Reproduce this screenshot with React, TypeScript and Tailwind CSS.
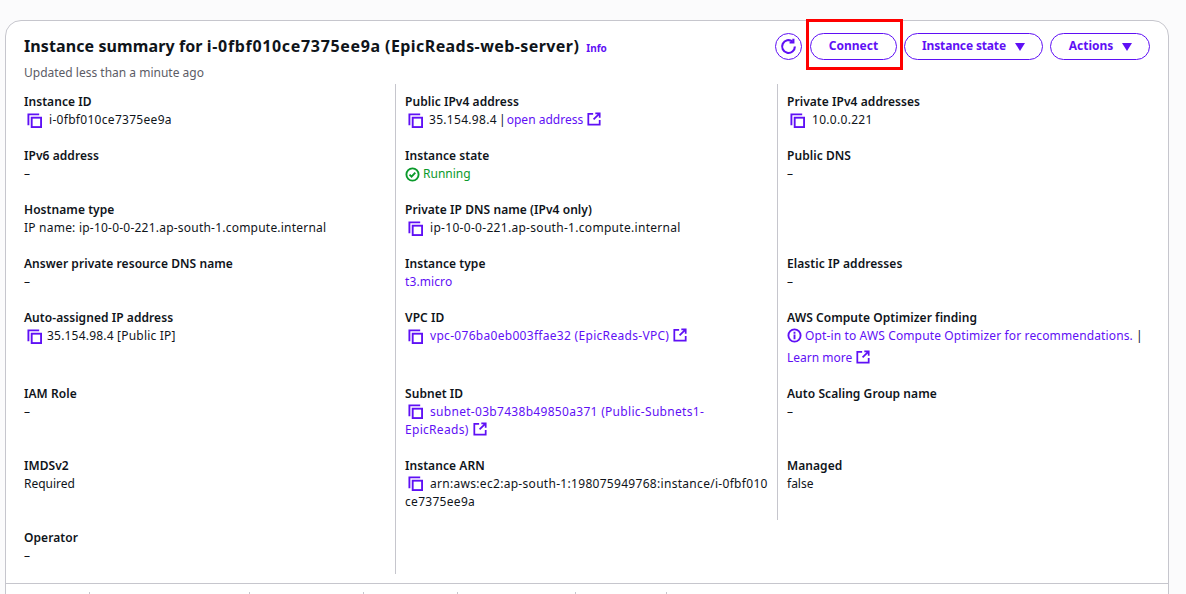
import React from 'react';

const LINK = 'text-[#5f10f5]';
const ID = 'tracking-[0.3px]';

const CopyIcon = () => (
  <svg viewBox="0 0 16 16" className={`w-[15px] h-[15px] shrink-0 ${LINK}`} fill="none" stroke="currentColor" strokeWidth="2">
    <path d="M1.5 13V1.5H13" />
    <rect x="5" y="5" width="10" height="10" />
  </svg>
);

const ExternalIcon = () => (
  <svg viewBox="0 0 16 16" className={`inline-block w-[14px] h-[14px] ml-[4px] align-[-2px] ${LINK}`} fill="none" stroke="currentColor" strokeWidth="2">
    <path d="M7 2H1.5v12.5h13V9" />
    <path d="M9.5 1.5h5v5M14.5 1.5 7.5 8.5" />
  </svg>
);

const Dash = () => <div>–</div>;

const Field = ({ label, children, border }: { label: string; children?: React.ReactNode; border?: boolean }) => (
  <div className={`pt-[9px] pb-[9px] pr-[8px] ${border ? 'border-l border-[#c6c6cd] pl-[9px]' : ''}`}>
    <div className="font-semibold leading-[18px] tracking-[0.06px]">{label}</div>
    <div className="leading-[18px]">{children}</div>
  </div>
);

const Tick = ({ w }: { w: string }) => <div className={`${w} border-r border-[#c6c6cd] h-[4px]`} />;

export default function App() {
  return (
    <div className="h-[594px] overflow-hidden bg-[#fbfbfc] pt-[20px] pl-[5px] pr-[17px] text-[12px] text-[#0f141a]" style={{ fontFamily: '"Noto Sans", sans-serif' }}>
      <div className="bg-white border border-[#c6c6cd] rounded-t-[16px] h-[600px]">
        {/* Header */}
        <div className="flex justify-between pl-[18px] pr-[18px] pt-[12px] h-[63px]">
          <div>
            <div className="flex items-baseline">
              <h1 className="text-[16px] font-bold leading-[26px] tracking-[0.1px]">
                Instance summary for <span className="tracking-[0.67px]">i-0fbf010ce7375ee9a</span>{' '}
                <span className="tracking-[0.42px]">(EpicReads-web-server)</span>
              </h1>
              <span className={`ml-[7px] text-[10px] font-bold ${LINK}`}>Info</span>
            </div>
            <div className="text-[#5c5c66] leading-[18px] mt-[5px]">Updated less than a minute ago</div>
          </div>
          <div className="flex items-start gap-[7px]">
            <button className={`w-[27px] h-[27px] rounded-full border border-[#5f10f5] flex items-center justify-center ${LINK}`}>
              <svg viewBox="0 0 16 16" className="w-[17px] h-[17px]" fill="none" stroke="currentColor" strokeWidth="2">
                <path d="M14 8a6 6 0 1 1-2.2-4.6" />
                <path d="M12.6.8v3.4H9" />
              </svg>
            </button>
            <div className="relative ml-[1px]">
              <button className={`w-[87px] h-[27px] rounded-full border border-[#5f10f5] font-bold pb-[2px] ${LINK}`}>Connect</button>
              <span className="absolute left-[-4px] top-[-14px] w-[97px] h-[51px] border-[3px] border-[#ff0000]" />
            </div>
            <button className={`w-[139px] h-[27px] rounded-full border border-[#5f10f5] font-bold flex items-center justify-center gap-[9px] ${LINK}`}>
              <span className="pb-[2px] tracking-[-0.15px]">Instance state</span>
              <svg viewBox="0 0 10 8" className="w-[10px] h-[8px]" fill="currentColor"><path d="M0 0h10L5 8z" /></svg>
            </button>
            <button className={`w-[100px] h-[27px] rounded-full border border-[#5f10f5] font-bold flex items-center justify-center gap-[9px] pl-[1px] ${LINK}`}>
              <span className="pb-[2px]">Actions</span>
              <svg viewBox="0 0 10 8" className="w-[10px] h-[8px]" fill="currentColor"><path d="M0 0h10L5 8z" /></svg>
            </button>
          </div>
        </div>

        {/* Details */}
        <div className="grid grid-cols-[371px_382px_1fr] pl-[18px] pr-[18px] h-[499px] content-start">
          <Field label="Instance ID">
            <div className={`flex items-center gap-[7px] pl-[3px] ${ID}`}><CopyIcon />i-0fbf010ce7375ee9a</div>
          </Field>
          <Field label="Public IPv4 address" border>
            <div className="flex items-center gap-[6px] pl-[3px]"><CopyIcon /><span><span className={ID}>35.154.98.4</span><span className="tracking-[-1px]"> | </span> <span className={LINK}>open address</span><ExternalIcon /></span></div>
          </Field>
          <Field label="Private IPv4 addresses" border>
            <div className={`flex items-center gap-[7px] pl-[3px] ${ID}`}><CopyIcon />10.0.0.221</div>
          </Field>

          <Field label="IPv6 address"><Dash /></Field>
          <Field label="Instance state" border>
            <div className="flex items-center gap-[3px] text-[#0a9a2b]">
              <svg viewBox="0 0 16 16" className="w-[15px] h-[15px]" fill="none" stroke="currentColor" strokeWidth="2"><circle cx="8" cy="8" r="6.5" /><path d="m4.8 8.2 2.2 2.2 4-4.4" /></svg>
              Running
            </div>
          </Field>
          <Field label="Public DNS" border><Dash /></Field>

          <Field label="Hostname type"><span className="tracking-[0.22px]">IP name: ip-10-0-0-221.ap-south-1.compute.internal</span></Field>
          <Field label="Private IP DNS name (IPv4 only)" border>
            <div className={`flex items-center gap-[7px] pl-[3px] ${ID}`}><CopyIcon />ip-10-0-0-221.ap-south-1.compute.internal</div>
          </Field>
          <div className="border-l border-[#c6c6cd]" />

          <Field label="Answer private resource DNS name"><Dash /></Field>
          <Field label="Instance type" border><span className={`${LINK} tracking-[0.1px]`}>t3.micro</span></Field>
          <Field label="Elastic IP addresses" border><Dash /></Field>

          <Field label="Auto-assigned IP address">
            <div className="flex items-center gap-[5px] pl-[3px] tracking-[0.2px]"><CopyIcon />35.154.98.4 [Public IP]</div>
          </Field>
          <Field label="VPC ID" border>
            <div className={`flex items-center gap-[7px] pl-[3px] ${LINK}`}><CopyIcon /><span><span className={ID}>vpc-076ba0eb003ffae32 (EpicReads-VPC)</span><ExternalIcon /></span></div>
          </Field>
          <Field label="AWS Compute Optimizer finding" border>
            <div className="whitespace-nowrap">
              <svg viewBox="0 0 16 16" className={`inline-block w-[15px] h-[15px] mr-[3px] align-[-3px] ${LINK}`} fill="none" stroke="currentColor" strokeWidth="2"><circle cx="8" cy="8" r="6.5" /><path d="M8 7v5M8 4v2" /></svg>
              <span className={`${LINK} tracking-[0.13px]`}>Opt-in to AWS Compute Optimizer for recommendations.</span> |
            </div>
            <div className={`mt-[4px] ${LINK}`}>Learn more<ExternalIcon /></div>
          </Field>

          <Field label="IAM Role"><Dash /></Field>
          <Field label="Subnet ID" border>
            <div className={`pr-[6px] ${LINK}`}>
              <span className="inline-block align-[-3px] ml-[3px] mr-[7px]"><CopyIcon /></span><span className={ID}>subnet-03b7438b49850a371 (Public-Subnets1-EpicReads)</span><ExternalIcon />
            </div>
          </Field>
          <Field label="Auto Scaling Group name" border><Dash /></Field>

          <Field label="IMDSv2">Required</Field>
          <Field label="Instance ARN" border>
            <div className={`break-all ${ID}`}>
              <span className="inline-block align-[-3px] ml-[3px] mr-[7px]"><CopyIcon /></span>arn:aws:ec2:ap-south-1:198075949768:instance/i-0fbf010ce7375ee9a
            </div>
          </Field>
          <Field label="Managed" border>false</Field>

          <Field label="Operator"><Dash /></Field>
          <div className="border-l border-[#c6c6cd]" />
        </div>

        {/* Tab strip */}
        <div className="border-t border-[#c6c6cd] pt-[8px] flex">
          <Tick w="w-[84px]" />
          <Tick w="w-[160px]" />
          <Tick w="w-[114px]" />
          <Tick w="w-[94px]" />
          <Tick w="w-[118px]" />
          <Tick w="w-[91px]" />
        </div>
      </div>
    </div>
  );
}
